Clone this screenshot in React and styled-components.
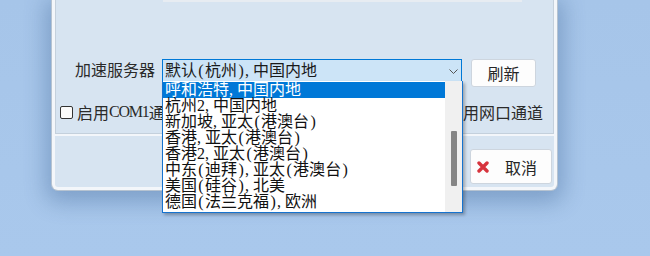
import React from "react";
import styled, { createGlobalStyle } from "styled-components";

const GlobalStyle = createGlobalStyle`
  html, body { margin: 0; padding: 0; background: #a8c7eb; }
  body { font-family: "Liberation Serif", "Noto Sans CJK SC", serif; }
`;

const Stage = styled.div`
  width: 650px;
  height: 256px;
  overflow: hidden;
  box-sizing: border-box;
  padding-left: 52px;
  background: linear-gradient(180deg, #a6c5e9 0%, #a9c8ec 100%);
`;

const Dialog = styled.div`
  width: 505px;
  box-sizing: border-box;
  background: #d7e4f1;
  border: 3px solid #f3f6fa;
  border-top: none;
  border-radius: 0 0 6px 6px;
  box-shadow: 0 0 0 1px #b6c3d1, 0 6px 22px 6px rgba(40, 80, 130, 0.33);
`;

const UpperPane = styled.div`
  position: relative;
  height: 134px;
  box-sizing: border-box;
  border: 1px solid #c4d0dc;
  border-top: none;
`;

const TopStrip = styled.div`
  margin-left: 107px;
  width: 359px;
  height: 2px;
  background: #e7ecf2;
`;

const ServerRow = styled.div`
  display: flex;
  align-items: flex-start;
  margin-top: 57px;
  padding-left: 19px;
`;

const Label = styled.span`
  width: 80px;
  margin-right: 7px;
  font-size: 16px;
  line-height: 23px;
  color: #2a2a2a;
  white-space: nowrap;
`;

const Combo = styled.div`
  position: relative;
  width: 300px;
  height: 23px;
  box-sizing: border-box;
  background: #cce4f7;
  border: 1px solid #0078d7;
  padding-left: 2px;
  font-size: 16px;
  line-height: 21px;
  color: #1a1a1a;
  white-space: nowrap;
`;

const Chevron = styled.svg`
  position: absolute;
  right: 3px;
  top: 9px;
`;

const DropList = styled.div`
  position: absolute;
  top: 100%;
  left: -1px;
  width: 301px;
  height: 132px;
  box-sizing: border-box;
  background: #fff;
  border: 1px solid #1673cf;
  border-top: none;
  box-shadow: 2px 2px 3px rgba(0, 0, 0, 0.28);
  display: flex;
  z-index: 5;
`;

const Items = styled.div`
  flex: 1;
  padding-top: 1px;
`;

const Item = styled.div`
  height: 16px;
  line-height: 16px;
  padding-left: 2px;
  font-size: 16px;
  white-space: nowrap;
  color: ${(p) => (p.$active ? "#fff" : "#111")};
  background: ${(p) => (p.$active ? "#0078d7" : "transparent")};
`;

const ScrollTrack = styled.div`
  width: 17px;
  background: #f0f0f0;
  padding-top: 50px;
  box-sizing: border-box;
`;

const Thumb = styled.div`
  margin-left: 6px;
  width: 6px;
  height: 55px;
  background: #858585;
  border-radius: 1px;
`;

const Button = styled.button`
  box-sizing: border-box;
  width: ${(p) => p.$w}px;
  height: ${(p) => p.$h}px;
  margin-left: ${(p) => p.$ml || 0}px;
  background: #fdfdfd;
  border: 1px solid #cdd5de;
  border-radius: 3px;
  font-family: inherit;
  font-size: 16px;
  color: #262626;
  display: flex;
  align-items: center;
  justify-content: ${(p) => (p.$icon ? "flex-start" : "center")};
  padding: 0 0 0 ${(p) => (p.$icon ? 6 : 0)}px;
  cursor: default;
`;

const CheckRow = styled.div`
  display: flex;
  justify-content: space-between;
  align-items: center;
  height: 18px;
  margin-top: 16px;
  padding: 0 10px 0 4px;
`;

const CheckGroup = styled.label`
  display: flex;
  align-items: center;
  font-size: 16px;
  color: #2a2a2a;
  white-space: nowrap;
`;

const Box = styled.span`
  width: 13px;
  height: 13px;
  box-sizing: border-box;
  border: 1px solid #333;
  border-radius: 2px;
  background: #fbfbfb;
  margin-right: 4px;
`;

const Latin = styled.span`
  letter-spacing: -1.2px;
`;

const BottomBar = styled.div`
  display: flex;
  justify-content: flex-end;
  border-top: 2px solid #f3f6fa;
  padding: 13px 2px 3px 0;
`;

const BtnText = styled.span`
  margin-left: ${(p) => p.$ml || 0}px;
`;

/* half-width cell for punctuation, as in a fixed-grid CJK font */
const Half = styled.span`
  display: inline-block;
  width: 8px;
  text-align: ${(p) => (p.$comma ? "left" : "center")};
`;

function Grid({ text }) {
  return (
    <>
      {Array.from(text).map((ch, i) =>
        /[(),]/.test(ch) ? (
          <Half key={i} $comma={ch === ","}>{ch}</Half>
        ) : (
          <React.Fragment key={i}>{ch}</React.Fragment>
        )
      )}
    </>
  );
}

const items = [
  "呼和浩特,中国内地",
  "杭州2,中国内地",
  "新加坡,亚太(港澳台)",
  "香港,亚太(港澳台)",
  "香港2,亚太(港澳台)",
  "中东(迪拜),亚太(港澳台)",
  "美国(硅谷),北美",
  "德国(法兰克福),欧洲",
];

export default function App() {
  return (
    <>
      <GlobalStyle />
      <Stage>
        <Dialog>
          <UpperPane>
            <TopStrip />
            <ServerRow>
              <Label>加速服务器</Label>
              <Combo>
                <Grid text="默认(杭州),中国内地" />
                <Chevron width="9" height="5" viewBox="0 0 9 5">
                  <polyline points="0.5,0.5 4.5,4.5 8.5,0.5" fill="none" stroke="#555" strokeWidth="1" />
                </Chevron>
                <DropList>
                  <Items>
                    {items.map((t, i) => (
                      <Item key={t} $active={i === 0}>
                        <Grid text={t} />
                      </Item>
                    ))}
                  </Items>
                  <ScrollTrack>
                    <Thumb />
                  </ScrollTrack>
                </DropList>
              </Combo>
              <Button $w={65} $h={28} $ml={9}>刷新</Button>
            </ServerRow>
            <CheckRow>
              <CheckGroup>
                <Box />
                启用<Latin>COM1</Latin>通道
              </CheckGroup>
              <CheckGroup>
                <Box />
                启用网口通道
              </CheckGroup>
            </CheckRow>
          </UpperPane>
          <BottomBar>
            <Button $w={82} $h={35} $icon>
              <svg width="12" height="12" viewBox="0 0 12 12">
                <path d="M2 2 L10 10 M10 2 L2 10" stroke="#d7343d" strokeWidth="3.4" strokeLinecap="round" />
              </svg>
              <BtnText $ml={16}>取消</BtnText>
            </Button>
          </BottomBar>
        </Dialog>
      </Stage>
    </>
  );
}
